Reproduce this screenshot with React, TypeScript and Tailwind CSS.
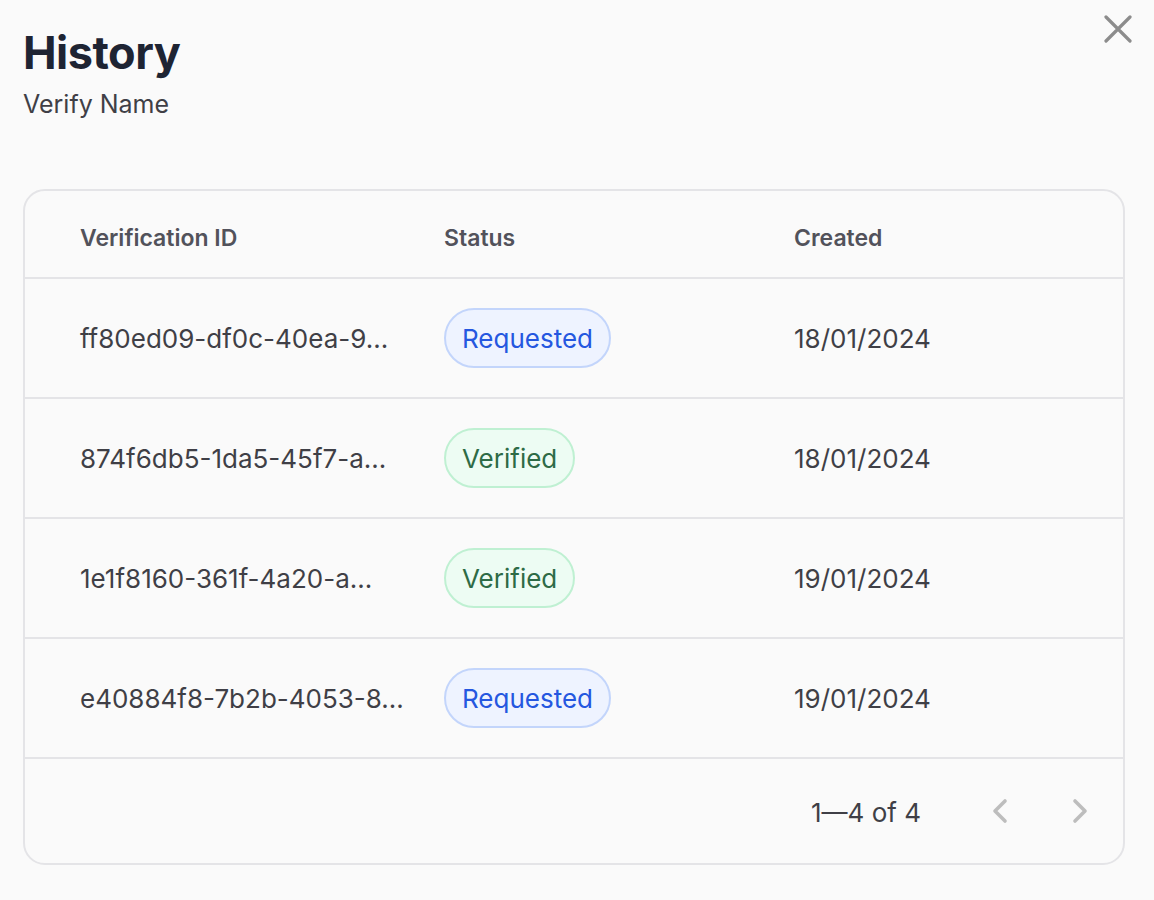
import React from 'react';

type Row = {
  id: string;
  status: 'Requested' | 'Verified';
  created: string;
};

const rows: Row[] = [
  { id: 'ff80ed09-df0c-40ea-9...', status: 'Requested', created: '18/01/2024' },
  { id: '874f6db5-1da5-45f7-a...', status: 'Verified', created: '18/01/2024' },
  { id: '1e1f8160-361f-4a20-a...', status: 'Verified', created: '19/01/2024' },
  { id: 'e40884f8-7b2b-4053-8...', status: 'Requested', created: '19/01/2024' },
];

const StatusPill = ({ status }: { status: Row['status'] }) => {
  if (status === 'Requested') {
    return (
      <span className="inline-flex h-[60px] items-center rounded-full border-2 border-[#c3d5fb] bg-[#eef3ff] px-[16px] pt-[1px] text-[26px] text-[#2557e0]">
        Requested
      </span>
    );
  }
  return (
    <span className="inline-flex h-[60px] items-center rounded-full border-2 border-[#bff0d2] bg-[#edfcf3] px-[16px] pt-[1px] text-[26px] text-[#2e6b46]">
      Verified
    </span>
  );
};

export default function App() {
  return (
    <div
      className="relative min-h-screen bg-[#fafafa] px-[23px] pt-[24px] pb-[36px]"
      style={{ fontFamily: 'Inter, Lato, sans-serif' }}
    >
      {/* close button */}
      <button className="absolute right-[22px] top-[15px] text-[#8c8c8c]" aria-label="Close">
        <svg width="28" height="28" viewBox="0 0 28 28" fill="none" stroke="currentColor" strokeWidth="3.2" strokeLinecap="round">
          <path d="M2 2L26 26M26 2L2 26" />
        </svg>
      </button>

      <h1 className="text-[45px] leading-[58px] font-bold tracking-[-0.5px] text-[#1e2433]">History</h1>
      <p className="mt-[5px] text-[25px] leading-[34px] text-[#3f3f46]">Verify Name</p>

      <div className="mt-[68px] w-[1102px] rounded-[22px] border-2 border-[#e4e4e7] bg-[#fafafa]">
        <div className="grid h-[88px] grid-cols-[364px_350px_1fr] items-center border-b-2 border-[#e4e4e7] pl-[55px] pt-[8px] text-[23px] font-semibold text-[#52525b]">
          <div>Verification ID</div>
          <div>Status</div>
          <div>Created</div>
        </div>

        {rows.map((row) => (
          <div
            key={row.id}
            className="grid h-[120px] grid-cols-[364px_350px_1fr] items-center border-b-2 border-[#e4e4e7] pl-[55px] text-[26px] text-[#3f3f46]"
          >
            <div className="pt-[1px]">{row.id}</div>
            <div>
              <StatusPill status={row.status} />
            </div>
            <div className="pt-[1px]">{row.created}</div>
          </div>
        ))}

        <div className="flex h-[104px] items-center justify-end pr-[34px]">
          <span className="mr-[70px] pt-[2px] text-[26px] text-[#3f3f46]">1—4 of 4</span>
          <button className="mr-[62px] text-[#bdbdbd]" aria-label="Previous page">
            <svg width="18" height="26" viewBox="0 0 18 26" fill="none" stroke="currentColor" strokeWidth="3.6" strokeLinecap="round" strokeLinejoin="round">
              <path d="M14 3L4 13L14 23" />
            </svg>
          </button>
          <button className="text-[#bdbdbd]" aria-label="Next page">
            <svg width="18" height="26" viewBox="0 0 18 26" fill="none" stroke="currentColor" strokeWidth="3.6" strokeLinecap="round" strokeLinejoin="round">
              <path d="M4 3L14 13L4 23" />
            </svg>
          </button>
        </div>
      </div>
    </div>
  );
}
